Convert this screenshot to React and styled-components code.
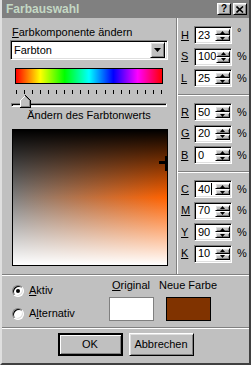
import React from "react";
import styled, { createGlobalStyle } from "styled-components";

const FACE = "#c0c0c0";

const raised = `
  border: 1px solid;
  border-color: #ffffff #000000 #000000 #ffffff;
  box-shadow: inset 1px 1px #dfdfdf, inset -1px -1px #808080;
`;

const sunken = `
  border: 1px solid;
  border-color: #808080 #ffffff #ffffff #808080;
  box-shadow: inset 1px 1px #000000, inset -1px -1px #dfdfdf;
`;

const GlobalStyle = createGlobalStyle`
  * { box-sizing: border-box; }
  html, body { margin: 0; padding: 0; background: ${FACE}; }
  body {
    font-family: "Liberation Sans", Arial, sans-serif;
    font-size: 11px;
    line-height: 13px;
    color: #000;
  }
`;

const Window = styled.div`
  width: 251px;
  height: 365px;
  background: ${FACE};
  border: 2px solid;
  border-color: #dfdfdf #404040 #404040 #dfdfdf;
  border-top-width: 0;
  display: flex;
  flex-direction: column;
  overflow: hidden;
`;

const TitleBar = styled.div`
  height: 18px;
  flex: none;
  background: #808080;
  display: flex;
  align-items: center;
  justify-content: space-between;
  padding: 0 2px 0 4px;
`;

const Title = styled.span`
  font-weight: bold;
  font-size: 12px;
  color: #c4d8c4;
`;

const TitleButtons = styled.div`
  display: flex;
  gap: 2px;
`;

const TitleButton = styled.span`
  width: 14px;
  height: 12px;
  background: ${FACE};
  ${raised}
  display: flex;
  align-items: center;
  justify-content: center;
  font-weight: bold;
  font-size: 10px;
  line-height: 10px;
`;

const Main = styled.div`
  display: grid;
  grid-template-columns: 174px 2px 1fr;
  height: 256px;
  flex: none;
`;

const VSep = styled.div`
  background: linear-gradient(to right, #808080 50%, #ffffff 50%);
`;

const HSep = styled.div`
  height: 2px;
  flex: none;
  background: linear-gradient(to bottom, #808080 50%, #ffffff 50%);
`;

const LeftPanel = styled.div`
  padding: 8px 0 0 8px;
  display: flex;
  flex-direction: column;
  align-items: flex-start;
`;

const FieldLabel = styled.div`
  padding-left: 2px;
  height: 13px;
`;

const Combo = styled.div`
  margin-top: 1px;
  width: 158px;
  height: 20px;
  background: #fff;
  ${sunken}
  padding: 2px;
  display: flex;
  align-items: center;
`;

const ComboText = styled.span`
  flex: 1;
  padding-left: 1px;
`;

const ComboButton = styled.span`
  width: 15px;
  height: 16px;
  background: ${FACE};
  ${raised}
  display: flex;
  align-items: center;
  justify-content: center;
`;

const HueBar = styled.div`
  margin: 8px 0 0 5px;
  width: 148px;
  height: 16px;
  border: 1px solid #000;
  background: linear-gradient(
    to right,
    #ff0000,
    #ffff00,
    #00ff00,
    #00ffff,
    #0000ff,
    #ff00ff,
    #ff0000
  );
`;

const Ticks = styled.div`
  margin: 6px 0 0 6px;
  width: 146px;
  height: 4px;
  display: flex;
  justify-content: space-between;
`;

const Tick = styled.span`
  width: 1px;
  height: 4px;
  background: #000;
`;

const Slider = styled.div`
  position: relative;
  margin: 1px 0 0 1px;
  width: 156px;
  height: 13px;
`;

const Track = styled.div`
  margin-top: 8px;
  height: 4px;
  border: 1px solid;
  border-color: #808080 #ffffff #ffffff #808080;
  background: #dfdfdf;
  box-shadow: inset 1px 1px #000;
`;

const Thumb = styled.svg`
  position: absolute;
  left: 9px;
  top: 0;
`;

const Caption = styled.div`
  width: 158px;
  margin-top: 1px;
  text-align: center;
`;

const Field = styled.div`
  position: relative;
  margin: 7px 0 0 2px;
  width: 156px;
  height: 137px;
  border: 1px solid #000;
  background:
    linear-gradient(
      to bottom,
      #000000 0%,
      rgba(0, 0, 0, 0) 50%,
      rgba(255, 255, 255, 0) 50%,
      #ffffff 100%
    ),
    linear-gradient(to right, hsl(23, 0%, 50%), hsl(23, 100%, 50%));
`;

const Marker = styled.svg`
  position: absolute;
  right: -1px;
  top: 26px;
`;

const RightPanel = styled.div`
  display: flex;
  flex-direction: column;
`;

const Group = styled.div`
  display: flex;
  flex-direction: column;
  gap: 3.5px;
  padding-top: ${(p) => p.$top}px;
  height: ${(p) => (p.$height ? `${p.$height}px` : "auto")};
  flex: ${(p) => (p.$height ? "none" : 1)};
`;

const Row = styled.div`
  display: flex;
  align-items: center;
  height: 18px;
  padding-left: 3px;
`;

const RowLabel = styled.u`
  width: 13px;
`;

const SpinBox = styled.div`
  width: 38px;
  height: 18px;
  background: #fff;
  ${sunken}
  padding: 2px 1px 2px 2px;
  display: flex;
`;

const SpinValue = styled.span`
  flex: 1;
  padding-left: 1px;
  display: flex;
  align-items: center;
  line-height: 13px;
`;

const Caret = styled.span`
  width: 1px;
  height: 12px;
  background: #000;
  margin-left: 1px;
`;

const SpinButtons = styled.div`
  width: 15px;
  display: flex;
  flex-direction: column;
`;

const SpinButton = styled.span`
  flex: 1;
  background: ${FACE};
  ${raised}
  display: flex;
  align-items: center;
  justify-content: center;
`;

const Unit = styled.span`
  margin-left: 5px;
  align-self: ${(p) => (p.$raise ? "flex-start" : "center")};
`;

const BottomArea = styled.div`
  height: 51px;
  flex: none;
  display: flex;
`;

const RadioCol = styled.div`
  width: 102px;
  padding: 8px 0 0 10px;
  display: flex;
  flex-direction: column;
  gap: 10px;
`;

const RadioRow = styled.div`
  display: flex;
  align-items: center;
  gap: 5px;
  height: 13px;
`;

const Radio = styled.span`
  width: 12px;
  height: 12px;
  border-radius: 50%;
  background: #fff;
  border: 1px solid;
  border-color: #808080 #ffffff #ffffff #808080;
  box-shadow: inset 1px 1px #000, inset -1px -1px #dfdfdf;
  display: flex;
  align-items: center;
  justify-content: center;

  &::after {
    content: "";
    width: 4px;
    height: 4px;
    border-radius: 50%;
    background: ${(p) => (p.$on ? "#000" : "transparent")};
  }
`;

const SwatchCol = styled.div`
  width: ${(p) => p.$w}px;
  margin-left: ${(p) => p.$gap}px;
  padding-top: 3px;
  display: flex;
  flex-direction: column;
  align-items: center;
  gap: 5px;
  white-space: nowrap;
`;

const Swatch = styled.div`
  width: 45px;
  height: 24px;
  background: ${(p) => p.$color};
  border: 1px solid ${(p) => p.$edge};
`;

const ButtonRow = styled.div`
  flex: 1;
  display: flex;
  justify-content: center;
  gap: 6px;
  padding-top: 4px;
`;

const Button = styled.button`
  width: 65px;
  height: 23px;
  font: inherit;
  color: #000;
  background: ${FACE};
  padding: 0;
  border: ${(p) => (p.$default ? "2px solid #000" : "1px solid")};
  border-color: ${(p) =>
    p.$default ? "#000" : "#ffffff #000000 #000000 #ffffff"};
  box-shadow: ${(p) =>
    p.$default
      ? "inset 1px 1px #ffffff, inset -1px -1px #808080"
      : "inset 1px 1px #dfdfdf, inset -1px -1px #808080"};
`;

const groups = [
  [
    ["H", "23", "°"],
    ["S", "100", "%"],
    ["L", "25", "%"],
  ],
  [
    ["R", "50", "%"],
    ["G", "20", "%"],
    ["B", "0", "%"],
  ],
  [
    ["C", "40", "%", true],
    ["M", "70", "%"],
    ["Y", "90", "%"],
    ["K", "10", "%"],
  ],
];

const groupLayout = [
  { top: 8, height: 76 },
  { top: 7, height: 75 },
  { top: 7 },
];

const Arrow = ({ up }) => (
  <svg width="5" height="3" viewBox="0 0 5 3">
    <polygon points={up ? "2.5,0 5,3 0,3" : "0,0 5,0 2.5,3"} fill="#000" />
  </svg>
);

const ValueRow = ({ label, value, unit, caret }) => (
  <Row>
    <RowLabel>{label}</RowLabel>
    <SpinBox>
      <SpinValue>
        {value}
        {caret && <Caret />}
      </SpinValue>
      <SpinButtons>
        <SpinButton>
          <Arrow up />
        </SpinButton>
        <SpinButton>
          <Arrow />
        </SpinButton>
      </SpinButtons>
    </SpinBox>
    <Unit $raise={unit === "°"}>{unit}</Unit>
  </Row>
);

export default function App() {
  return (
    <>
      <GlobalStyle />
      <Window>
        <TitleBar>
          <Title>Farbauswahl</Title>
          <TitleButtons>
            <TitleButton>?</TitleButton>
            <TitleButton>
              <svg width="8" height="7" viewBox="0 0 8 7">
                <path d="M0.5 0.5 L7 6.5 M7 0.5 L0.5 6.5" stroke="#000" strokeWidth="1.6" />
              </svg>
            </TitleButton>
          </TitleButtons>
        </TitleBar>

        <Main>
          <LeftPanel>
            <FieldLabel>
              <u>F</u>arbkomponente ändern
            </FieldLabel>
            <Combo>
              <ComboText>Farbton</ComboText>
              <ComboButton>
                <svg width="7" height="4" viewBox="0 0 7 4">
                  <polygon points="0,0 7,0 3.5,4" fill="#000" />
                </svg>
              </ComboButton>
            </Combo>
            <HueBar />
            <Ticks>
              {Array.from({ length: 19 }).map((_, i) => (
                <Tick key={i} />
              ))}
            </Ticks>
            <Slider>
              <Track />
              <Thumb width="11" height="13" viewBox="0 0 11 13" shapeRendering="crispEdges">
                <polygon points="5,0 10,5 10,12 0,12 0,5" fill="#c0c0c0" />
                <polyline points="0.5,12 0.5,5.5 5.5,0.5" stroke="#fff" fill="none" />
                <polyline points="5.5,0.5 10.5,5.5 10.5,12.5 0,12.5" stroke="#000" fill="none" />
                <polyline points="5.5,1.5 9.5,5.5 9.5,11.5 1,11.5" stroke="#808080" fill="none" />
              </Thumb>
            </Slider>
            <Caption>Ändern des Farbtonwerts</Caption>
            <Field>
              <Marker width="9" height="15" viewBox="0 0 9 15" shapeRendering="crispEdges">
                <rect x="6" y="0" width="3" height="15" fill="#000" />
                <rect x="0" y="5" width="9" height="3" fill="#000" />
              </Marker>
            </Field>
          </LeftPanel>

          <VSep />

          <RightPanel>
            {groups.map((rows, gi) => (
              <React.Fragment key={gi}>
                {gi > 0 && <HSep />}
                <Group $top={groupLayout[gi].top} $height={groupLayout[gi].height}>
                  {rows.map(([label, value, unit, caret]) => (
                    <ValueRow key={label} label={label} value={value} unit={unit} caret={caret} />
                  ))}
                </Group>
              </React.Fragment>
            ))}
          </RightPanel>
        </Main>

        <HSep />

        <BottomArea>
          <RadioCol>
            <RadioRow>
              <Radio $on />
              <span>
                <u>A</u>ktiv
              </span>
            </RadioRow>
            <RadioRow>
              <Radio />
              <span>
                A<u>l</u>ternativ
              </span>
            </RadioRow>
          </RadioCol>
          <SwatchCol $w={50} $gap={2}>
            <span>
              <u>O</u>riginal
            </span>
            <Swatch $color="#ffffff" $edge="#808080" />
          </SwatchCol>
          <SwatchCol $w={56} $gap={4}>
            <span>Neue Farbe</span>
            <Swatch $color="#803300" $edge="#000000" />
          </SwatchCol>
        </BottomArea>

        <HSep />

        <ButtonRow>
          <Button $default>OK</Button>
          <Button>Abbrechen</Button>
        </ButtonRow>
      </Window>
    </>
  );
}
